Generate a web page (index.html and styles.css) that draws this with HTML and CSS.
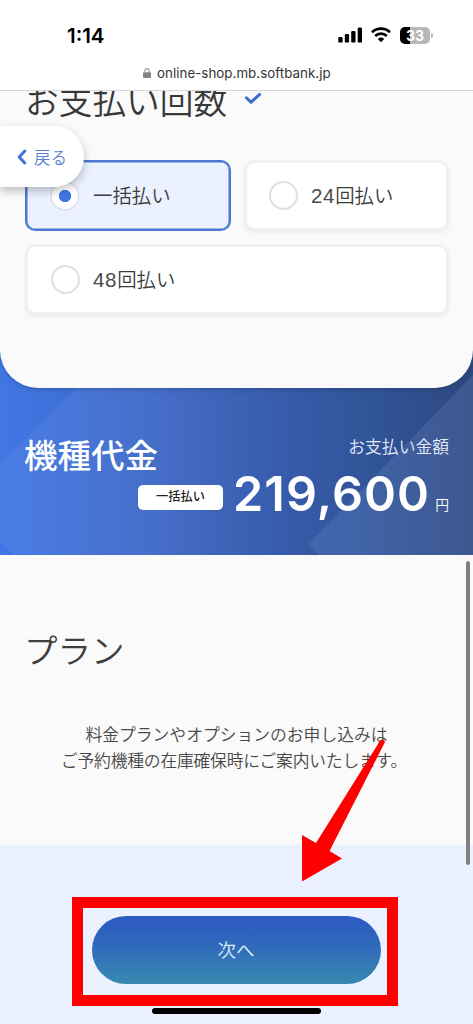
FILE: index.html
```html
<!DOCTYPE html>
<html lang="ja">
<head>
<meta charset="utf-8">
<meta name="viewport" content="width=device-width, initial-scale=1">
<title>お支払い回数</title>
<link rel="stylesheet" href="styles.css">
</head>
<body>
<div class="screen">
  <header class="browser-bar">
    <div class="status">
      <span class="clock">1:14</span>
      <div class="status-icons">
        <svg class="signal" width="25" height="16" viewBox="0 0 25 16"><rect x="0.3" y="10" width="4.3" height="5.6" rx="1.2"/><rect x="6.8" y="7" width="4.3" height="8.6" rx="1.2"/><rect x="13.2" y="4" width="4.3" height="11.6" rx="1.2"/><rect x="19.7" y="0.6" width="4.3" height="15" rx="1.2"/></svg>
        <svg class="wifi" width="20" height="16" viewBox="0 0 20 16" fill="none" stroke="#000" stroke-width="2.6"><path d="M1 5.3C6 .4 14 .4 19 5.3M4.2 9C7.5 5.8 12.5 5.8 15.8 9"/><path d="M10 15.2L6.8 12Q10 9.2 13.2 12Z" fill="#000" stroke="none"/></svg>
        <div class="battery"><span class="battery-body">33</span><span class="battery-tip"></span></div>
      </div>
    </div>
    <div class="address">
      <svg width="8" height="10" viewBox="0 0 8 10"><rect y="4.2" width="8" height="5.8" rx="1" fill="#858585"/><path d="M1.8 4.5V2.8a2.2 2.2 0 0 1 4.4 0v1.7" fill="none" stroke="#999" stroke-width="1.1"/></svg>
      <span>online-shop.mb.softbank.jp</span>
    </div>
  </header>
  <button class="back"><svg width="10" height="16" viewBox="0 0 10 16" fill="none" stroke="#3f74df" stroke-width="3" stroke-linecap="round" stroke-linejoin="round"><path d="M7.8 2L2.2 8l5.6 6"/></svg><span>戻る</span></button>
  <main>
    <div class="price-wrap">
      <svg class="facets" width="473" height="215" viewBox="0 0 473 215"><path d="M0 124L125 0H473V215H13L0 202Z" fill="#fff" opacity=".05"/><path d="M473 35V215H319L309 204Z" fill="#a9c4ff" opacity=".13"/></svg>
      <section class="payment">
        <h2 class="payment-title"><span>お支払い回数</span><svg width="18" height="13" viewBox="0 0 18 13" fill="none" stroke="#426ccc" stroke-width="3"><path d="M1.5 5L7 10.2 16.5 1.6"/></svg></h2>
        <div class="options">
          <div class="option selected"><i class="radio"></i><span>一括払い</span></div>
          <div class="option"><i class="radio"></i><span><b>24</b>回払い</span></div>
          <div class="option wide"><i class="radio"></i><span><b>48</b>回払い</span></div>
        </div>
      </section>
      <section class="price">
        <div class="price-head"><h2>機種代金</h2><span>お支払い金額</span></div>
        <div class="amount"><span class="method">一括払い</span><strong>219,600</strong><span class="yen">円</span></div>
      </section>
    </div>
    <section class="plan">
      <h2>プラン</h2>
      <p>料金プランやオプションのお申し込みは<br><span class="tight">ご予約機種の在庫確保時にご案内いたします。</span></p>
    </section>
  </main>
  <footer class="footer">
    <div class="highlight"><button class="next">次へ</button></div>
    <div class="home-indicator"></div>
  </footer>
  <div class="scrollbar"></div>
  <svg class="arrow" width="90" height="145" viewBox="0 0 90 145"><path d="M80.500 1Q84.500 0 85 3L57 58 29.500 112 42 119.500 2 142.500V96L16 104Z" fill="#f00"/></svg>
</div>
</body>
</html>
```
FILE: styles.css
```css
* { box-sizing: border-box; }
body { margin: 0; background: #fafafa; color: #444; font-family: "Noto Sans CJK JP", sans-serif; }
h2, p { margin: 0; font-weight: 350; }
button { border: 0; padding: 0; font-family: inherit; }
svg { display: block; flex: none; }
.screen { position: relative; width: 473px; height: 1024px; overflow: hidden; display: flex; flex-direction: column; }

.browser-bar { height: 91px; flex: none; background: #fff; border-bottom: 1px solid #d6d6d6; font-family: Inter, sans-serif; position: relative; z-index: 2; }
.status { height: 64px; padding: 24px 40px 0 67px; display: flex; justify-content: space-between; }
.clock { font-size: 20.5px; line-height: 23px; font-weight: 600; color: #000; }
.status-icons { display: flex; padding-top: 3px; }
.wifi { margin-left: 8px; }
.battery { display: flex; align-items: center; height: 17px; margin-left: 9px; }
.battery-body { width: 30px; height: 17px; border-radius: 5px; background: linear-gradient(90deg, #000 10px, #b8b8b8 10px); color: #fff; font-size: 14px; line-height: 17px; font-weight: 700; text-align: center; }
.battery-tip { width: 2px; height: 5px; margin-left: 1px; border-radius: 0 2px 2px 0; background: #b8b8b8; }
.address { display: flex; align-items: center; gap: 6px; height: 18px; padding-left: 143px; font-size: 13.3px; letter-spacing: .05px; color: #333; white-space: nowrap; line-height: 16px; }

.back { position: absolute; z-index: 3; left: 0; top: 126px; width: 84px; height: 61px; display: flex; align-items: center; gap: 7px; padding-left: 17px; border-radius: 0 30px 30px 0; background: #fff; box-shadow: 0 4px 10px rgba(0,0,0,.24); color: #5b82d4; font-size: 16.5px; font-weight: 350; }

.price-wrap { position: relative; height: 464px; background: linear-gradient(90deg, #4176e5 0%, #3c68c7 32%, #3158b0 52%, #25498f 82%, #233f79 100%); }
.facets { position: absolute; left: 0; bottom: 0; }
.payment { position: relative; height: 297px; padding: 0 25px; background: #fafafa; border-radius: 0 0 38px 38px; box-shadow: 0 2px 5px rgba(0,0,0,.15); }
.payment-title { height: 69px; display: flex; font-size: 33.7px; line-height: 34px; color: #383838; }
.payment-title span { margin-top: -8px; }
.payment-title svg { margin: 1px 0 0 17px; }
.options { display: grid; grid-template-columns: 206px 205px; gap: 13px; }
.option { height: 71px; display: flex; align-items: center; gap: 13px; padding-left: 22px; border: 3px solid #f0f0f1; border-radius: 10px; background: #fff; box-shadow: 0 2px 4px rgba(0,0,0,.06); font-size: 19.4px; font-weight: 350; color: #3c3c3c; }
.option span { margin-top: -2px; }
.option b { font: 400 20.5px "Liberation Sans", sans-serif; letter-spacing: .7px; color: #4a4a4a; }
.wide { grid-column: span 2; width: 424px; padding-left: 23px; }
.radio { width: 29px; height: 29px; border: 2px solid #dce2e4; border-radius: 50%; background: #fff; }
.selected { border: 2.5px solid #4b78d3; background: #ebf1fe; padding-left: 25px; gap: 15px; box-shadow: inset 0 0 0 .5px #4b78d3; }
.selected .radio { width: 26px; height: 26px; border: 0; background: radial-gradient(circle, #3f76e3 5.8px, #fff 6.5px); box-shadow: 0 0 3px rgba(0,0,0,.25); }

.price { position: relative; padding: 43px 24px 0; color: #fff; }
.price-head { display: flex; justify-content: space-between; height: 46px; }
.price-head h2 { font-size: 33.5px; font-weight: 500; line-height: 46px; }
.price-head span { font-size: 16.8px; font-weight: 350; line-height: 30px; color: #e4eaf7; }
.amount { display: flex; justify-content: flex-end; height: 60px; }
.method { width: 85px; height: 25px; margin: 8px 10px 0 0; border-radius: 5px; background: #fff; color: #222; font-size: 12.2px; line-height: 23px; font-weight: 500; text-align: center; }
.amount strong { font: 600 48.5px/60px Inter, sans-serif; letter-spacing: 1.1px; margin-top: -13px; }
.yen { font-size: 13.8px; font-weight: 350; line-height: 20px; margin: 17px 0 0 5px; }

.plan { height: 290px; padding: 69px 24px 0; color: #3f3f3f; background: #fafafa; }
.plan h2 { font-size: 33.5px; line-height: 50px; }
.plan p { margin-top: 48px; text-align: center; white-space: nowrap; font-size: 16.8px; line-height: 25.5px; color: #484848; }
.tight { letter-spacing: -.2px; margin-right: 5px; }

.footer { flex: 1; padding-top: 52px; background: #ebf1fe; }
.highlight { width: 326px; height: 109px; margin-left: 72px; border: 11px solid #f00; display: flex; align-items: center; padding: 0 0 3px 9px; }
.next { width: 289px; height: 68px; border-radius: 34px; background: linear-gradient(#2b59c2 0%, #2f66bd 35%, #3888b0 100%); color: #dcedf5; font-size: 18.5px; font-weight: 350; padding: 0 1px 2px 0; }
.home-indicator { width: 169px; height: 6px; margin: 2px 0 0 152px; border-radius: 3px; background: #000; }
.scrollbar { position: absolute; left: 466px; top: 561px; width: 4px; height: 304px; border-radius: 2px; background: #808083; }
.arrow { position: absolute; left: 300px; top: 739px; }
```
